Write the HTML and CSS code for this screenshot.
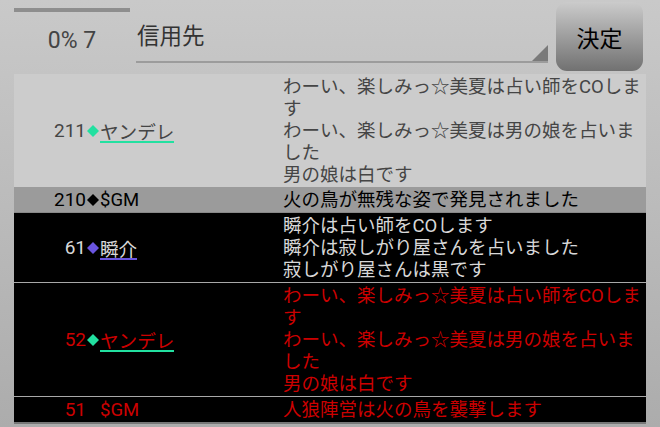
FILE: index.html
```html
<!DOCTYPE html>
<html lang="ja">
<head>
<meta charset="utf-8">
<link rel="stylesheet" href="styles.css">
</head>
<body>
<div class="header">
  <div class="progress">
    <div class="bar"></div>
    <div class="pct">0% 7</div>
  </div>
  <div class="select">
    <span class="sel-text">信用先</span>
    <span class="tri"></span>
  </div>
  <button class="btn">決定</button>
</div>
<div class="log">
  <div class="row light">
    <div class="who"><span class="num">211</span><svg class="dia" viewBox="0 0 14 12"><polygon points="7,0 13,6 7,12 1,6" fill="#22e0a0"/></svg><span class="name teal">ヤンデレ</span></div>
    <div class="msg">わーい、楽しみっ☆美夏は占い師をCOします<br>わーい、楽しみっ☆美夏は男の娘を占いました<br>男の娘は白です</div>
  </div>
  <div class="row gm">
    <div class="who"><span class="num">210</span><svg class="dia" viewBox="0 0 14 12"><polygon points="7,0 13,6 7,12 1,6" fill="#000"/></svg><span class="latin">$GM</span></div>
    <div class="msg">火の鳥が無残な姿で発見されました</div>
  </div>
  <div class="row dark">
    <div class="who"><span class="num">61</span><svg class="dia" viewBox="0 0 14 12"><polygon points="7,0 13,6 7,12 1,6" fill="#6a55e0"/></svg><span class="name purple">瞬介</span></div>
    <div class="msg">瞬介は占い師をCOします<br>瞬介は寂しがり屋さんを占いました<br>寂しがり屋さんは黒です</div>
  </div>
  <div class="row red">
    <div class="who"><span class="num">52</span><svg class="dia" viewBox="0 0 14 12"><polygon points="7,0 13,6 7,12 1,6" fill="#22e0a0"/></svg><span class="name teal">ヤンデレ</span></div>
    <div class="msg">わーい、楽しみっ☆美夏は占い師をCOします<br>わーい、楽しみっ☆美夏は男の娘を占いました<br>男の娘は白です</div>
  </div>
  <div class="row red last">
    <div class="who"><span class="num">51</span><span class="dia-gap"></span><span class="latin">$GM</span></div>
    <div class="msg">人狼陣営は火の鳥を襲撃します</div>
  </div>
</div>
</body>
</html>
```
FILE: styles.css
```css
html, body {
  margin: 0;
  padding: 0;
}
body {
  width: 660px;
  height: 427px;
  overflow: hidden;
  background: linear-gradient(#c9c9c9, #acacac);
  font-family: Roboto, "Noto Sans CJK JP", sans-serif;
}
.header {
  display: flex;
  align-items: flex-start;
  height: 74px;
  padding-left: 14px;
  box-sizing: border-box;
}
.progress {
  width: 116px;
  display: flex;
  flex-direction: column;
}
.bar {
  margin-top: 8px;
  height: 4px;
  background: #8e8e8e;
}
.pct {
  margin-top: 15px;
  text-align: center;
  font-size: 23px;
  line-height: 28px;
  color: #444;
}
.select {
  position: relative;
  margin-left: 6px;
  width: 412px;
  height: 61px;
  border-bottom: 2px solid #9c9c9c;
}
.sel-text {
  display: block;
  padding-left: 1px;
  padding-top: 20px;
  font-family: "Noto Sans CJK JP", sans-serif;
  font-size: 22.5px;
  line-height: 28px;
  color: #333;
}
.tri {
  position: absolute;
  right: 0;
  bottom: 0;
  width: 0;
  height: 0;
  border-left: 16px solid transparent;
  border-bottom: 16px solid #7a7a7a;
}
.btn {
  margin-left: 8px;
  margin-top: 2px;
  width: 87px;
  height: 69px;
  border: none;
  border-radius: 11px;
  background: linear-gradient(#cbcbcb, #717171);
  font-family: "Noto Sans CJK JP", sans-serif;
  font-size: 23px;
  color: #000;
  padding: 0;
}
.log {
  margin-left: 14px;
  width: 632px;
}
.row {
  display: grid;
  grid-template-columns: 269px 1fr;
  border-bottom: 1px solid #a8a8a8;
}
.row.light { background: #cccccc; color: #454545; border-bottom: none; }
.row.gm { background: #9b9b9b; color: #000; border-bottom-color: #888; }
.row.dark { background: #000; color: #d8d8d8; }
.row.red { background: #000; color: #cc0000; }
.row.last { border-bottom: 2px solid #777; }
.who {
  display: flex;
  align-items: center;
}
.num {
  width: 72px;
  text-align: right;
  font-size: 19px;
  line-height: 22px;
}
.dia {
  width: 14px;
  height: 12px;
  display: block;
}
.dia-gap {
  width: 14px;
}
.latin {
  font-size: 18.5px;
  line-height: 22px;
}
.name {
  font-family: "Noto Sans CJK JP", sans-serif;
  font-size: 18.6px;
  line-height: 20px;
  padding-top: 2px;
  border-bottom: 2.5px solid;
}
.name.teal { border-bottom-color: #22e0a0; }
.name.purple { border-bottom-color: #6a55e0; }
.msg {
  padding: 2px 0 1px;
  font-size: 18.5px;
  line-height: 22px;
}
```
